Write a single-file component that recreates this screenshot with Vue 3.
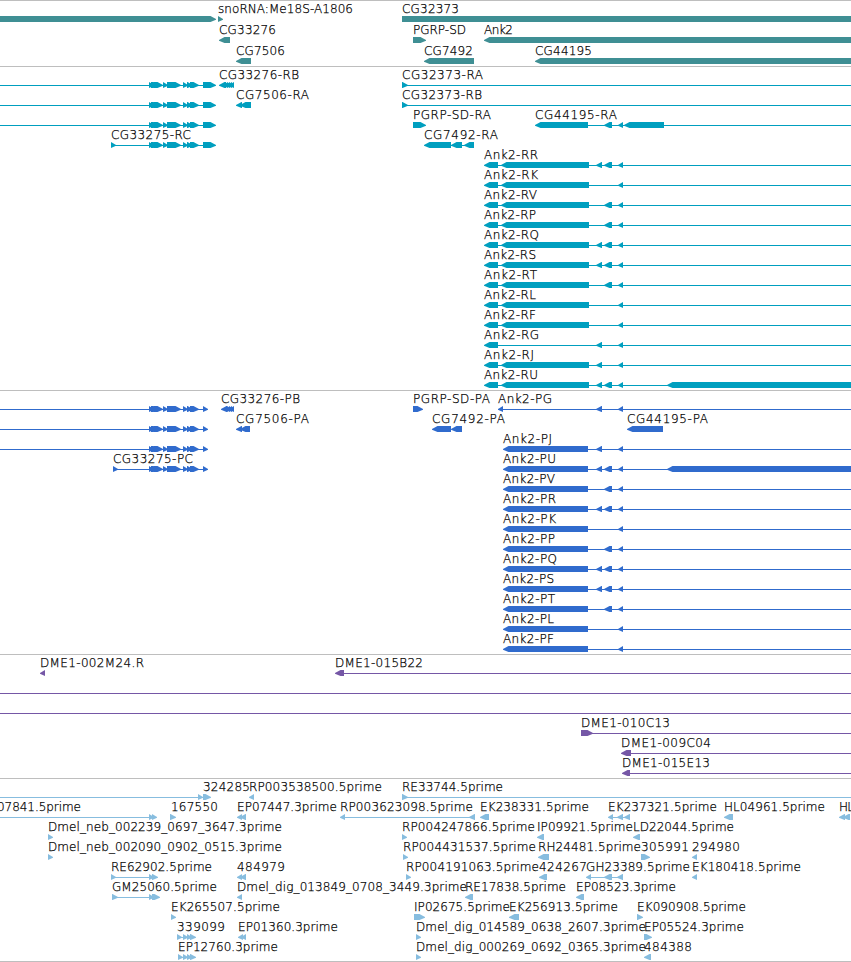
<template>
  <div class="browser">
    <section
      v-for="track in tracks"
      :key="track.name"
      class="track"
      :class="track.name"
    >
      <svg v-for="(row, i) in track.rows" :key="i" class="row">
        <g v-for="(f, j) in row" :key="j">
          <rect
            v-if="f.line"
            :x="f.line[0]"
            y="18"
            :width="f.line[1] - f.line[0]"
            height="1"
          />
          <path v-for="(p, k) in f.parts" :key="k" :d="arrow(p, f.dir)" />
          <text v-if="f.label" :x="f.x" y="12" :textLength="f.width">
            {{ f.label }}
          </text>
        </g>
      </svg>
    </section>
  </div>
</template>

<script setup>
const END = 851;

// label, label start, label end, direction, exons, connecting line
const feat = (label, x, end, dir, parts, line) => ({
  label,
  x,
  width: end - x,
  dir,
  parts,
  line,
});

function arrow([a, b], dir) {
  const head = Math.min(5.5, b - a);
  if (dir > 0) {
    const s = b - head;
    return `M${a} 15H${s}L${b} 17.9V18.7L${s} 21H${a}Z`;
  }
  const s = a + head;
  return `M${b} 15H${s}L${a} 17.9V18.7L${s} 21H${b}Z`;
}

const shared = [
  [149, 154],
  [151, 159],
  [154, 163],
  [163, 168],
  [167, 181],
  [183, 188],
  [187, 193],
  [190, 199],
];
const rnaExons = [...shared, [203, 216]];
const cdsExons = [...shared, [203, 208]];

const C = [596, 602];
const D = [604, 612];
const E = [618, 623];
const U = [667, 860];

const rna = (name, end, parts) =>
  feat("Ank2-" + name, 484, end, -1, [[484, 498], ...parts], [496, END]);
const cds = (name, end, parts) =>
  feat("Ank2-" + name, 503, end, -1, [[503, 588], ...parts], [588, END]);
const B = [501, 589];

const genes = [
  [
    feat("", 0, 0, 1, [[-10, 216]]),
    feat("snoRNA:Me18S-A1806", 218, 353, 1, [[218, 223]]),
    feat("CG32373", 402, 459, 1, [[402, 870]]),
  ],
  [
    feat("CG33276", 219, 276, -1, [[219, 230]]),
    feat("PGRP-SD", 413, 466, 1, [[413, 426]]),
    feat("Ank2", 484, 513, -1, [[484, 860]]),
  ],
  [
    feat("CG7506", 236, 285, -1, [[236, 251]]),
    feat("CG7492", 424, 473, -1, [[424, 474]]),
    feat("CG44195", 535, 592, -1, [[535, 860]]),
  ],
];

const transcripts = [
  [
    feat("", 0, 0, 1, rnaExons, [0, 205]),
    feat("CG33276-RB", 219, 299, -1, [[219, 226], [223, 228], [225, 230], [227, 232], [229, 234]]),
    feat("CG32373-RA", 402, 483, 1, [[402, 408]], [402, END]),
  ],
  [
    feat("", 0, 0, 1, rnaExons, [0, 205]),
    feat("CG7506-RA", 236, 309, -1, [[236, 242], [240, 251]]),
    feat("CG32373-RB", 402, 482, 1, [[402, 408]], [402, END]),
  ],
  [
    feat("", 0, 0, 1, rnaExons, [0, 205]),
    feat("PGRP-SD-RA", 413, 491, 1, [[413, 426]]),
    feat("CG44195-RA", 535, 617, -1, [[535, 588], D, E, [624, 664]], [588, END]),
  ],
  [
    feat("CG33275-RC", 111, 191, 1, [[111, 116], ...rnaExons], [111, 205]),
    feat("CG7492-RA", 424, 498, -1, [[424, 451], [451, 462], [464, 474]], [450, 474]),
  ],
  [rna("RR", 538, [B, C, D, E])],
  [rna("RK", 538, [B, E])],
  [rna("RV", 537, [B, D, E])],
  [rna("RP", 536, [B, D, E])],
  [rna("RQ", 539, [B, C, D, E])],
  [rna("RS", 536, [B, C, D, E])],
  [rna("RT", 537, [B, D, E])],
  [rna("RL", 536, [B, E])],
  [rna("RF", 536, [B, E])],
  [rna("RG", 539, [C, E])],
  [rna("RJ", 534, [B, C, E])],
  [rna("RU", 538, [B, C, D, E, U])],
];

const proteins = [
  [
    feat("", 0, 0, 1, cdsExons, [0, 205]),
    feat("CG33276-PB", 221, 300, -1, [[221, 227], [223, 228], [225, 230], [227, 232], [229, 234]]),
    feat("PGRP-SD-PA", 413, 490, 1, [[413, 423]]),
    feat("Ank2-PG", 498, 552, -1, [[498, 503], C, E], [498, END]),
  ],
  [
    feat("", 0, 0, 1, cdsExons, [0, 205]),
    feat("CG7506-PA", 236, 309, -1, [[236, 242], [240, 250]]),
    feat("CG7492-PA", 432, 505, -1, [[432, 451], [451, 462]]),
    feat("CG44195-PA", 627, 708, -1, [[627, 663]]),
  ],
  [
    feat("", 0, 0, 1, cdsExons, [0, 205]),
    cds("PJ", 552, [C, E]),
  ],
  [
    feat("CG33275-PC", 113, 193, 1, [[113, 118], ...cdsExons], [113, 205]),
    cds("PU", 556, [C, D, E, U]),
  ],
  [cds("PV", 555, [D, E])],
  [cds("PR", 556, [C, D, E])],
  [cds("PK", 556, [E])],
  [cds("PP", 555, [D, E])],
  [cds("PQ", 557, [C, D, E])],
  [cds("PS", 554, [C, D, E])],
  [cds("PT", 555, [D, E])],
  [cds("PL", 554, [E])],
  [cds("PF", 554, [E])],
];

const bacs = [
  [
    feat("DME1-002M24.R", 40, 144, -1, [[40, 45]]),
    feat("DME1-015B22", 335, 423, -1, [[335, 344]], [343, END]),
  ],
  [feat("", 0, 0, 1, [], [0, END])],
  [feat("", 0, 0, 1, [], [0, END])],
  [feat("DME1-010C13", 581, 670, 1, [[581, 593]], [590, END])],
  [feat("DME1-009C04", 621, 711, -1, [[621, 631]], [630, END])],
  [feat("DME1-015E13", 622, 710, -1, [[622, 630]], [629, END])],
];

const ests = [
  [
    feat("324285", 203, 250, 1, [[198, 203], [203, 211]], [0, 203]),
    feat("RP003538500.5prime", 249, 382, -1, [[249, 254]]),
    feat("RE33744.5prime", 402, 503, 1, [[402, 408]], [402, END]),
  ],
  [
    feat("07841.5prime", -3, 81, 1, [[149, 154], [152, 157]], [0, 150]),
    feat("167550", 171, 218, 1, [[170, 176]]),
    feat("EP07447.3prime", 237, 337, -1, [[237, 242], [240, 246]]),
    feat("RP003623098.5prime", 340, 473, -1, [[340, 345], [469, 475]], [342, 472]),
    feat("EK238331.5prime", 480, 589, -1, [[480, 489]]),
    feat("EK237321.5prime", 608, 717, -1, [[608, 613], [617, 623], [624, 630]], [610, 628]),
    feat("HL04961.5prime", 724, 825, -1, [[724, 733]]),
    feat("HL", 839, 854, -1, [[839, 845], [843, 850]]),
  ],
  [
    feat("Dmel_neb_002239_0697_3647.3prime", 48, 282, 1, [[48, 53]]),
    feat("RP004247866.5prime", 402, 535, 1, [[402, 407]]),
    feat("IP09921.5prime", 537, 633, -1, [[537, 544]]),
    feat("LD22044.5prime", 633, 734, -1, [[633, 640]]),
  ],
  [
    feat("Dmel_neb_002090_0902_0515.3prime", 48, 282, 1, [[48, 53]]),
    feat("RP004431537.5prime", 403, 536, 1, [[403, 408]]),
    feat("RH24481.5prime", 538, 641, -1, [[538, 549]]),
    feat("305991", 641, 689, 1, [[641, 650]]),
    feat("294980", 692, 740, -1, [[692, 697]]),
  ],
  [
    feat("RE62902.5prime", 111, 212, 1, [[111, 116], [149, 154], [152, 158]], [111, 152]),
    feat("484979", 237, 285, -1, [[237, 242], [240, 246]]),
    feat("RP004191063.5prime", 406, 539, 1, [[406, 411]]),
    feat("424267", 539, 587, -1, [[539, 547]]),
    feat("GH23389.5prime", 586, 690, -1, [[586, 591], [604, 612], [617, 623]], [588, 622]),
    feat("EK180418.5prime", 692, 801, -1, [[692, 697]]),
  ],
  [
    feat("GM25060.5prime", 112, 217, 1, [[112, 118], [149, 154], [152, 160]], [112, 152]),
    feat("Dmel_dig_013849_0708_3449.3prime", 237, 467, -1, [[237, 242]]),
    feat("RE17838.5prime", 465, 566, -1, [[465, 473]]),
    feat("EP08523.3prime", 576, 676, -1, [[576, 584]]),
  ],
  [
    feat("EK265507.5prime", 171, 280, 1, [[171, 176]]),
    feat("IP02675.5prime", 414, 510, 1, [[414, 425]]),
    feat("EK256913.5prime", 509, 618, -1, [[509, 519]]),
    feat("EK090908.5prime", 637, 746, 1, [[637, 643]]),
  ],
  [
    feat("339099", 177, 225, 1, [[177, 182], [183, 188], [187, 192], [190, 196]], [177, 192]),
    feat("EP01360.3prime", 238, 338, -1, [[238, 243], [241, 246]]),
    feat("Dmel_dig_014589_0638_2607.3prime", 416, 646, 1, [[416, 421]]),
    feat("EP05524.3prime", 644, 744, 1, [[644, 652]]),
  ],
  [
    feat("EP12760.3prime", 178, 278, 1, [[178, 183], [183, 188], [187, 192], [190, 196]], [178, 192]),
    feat("Dmel_dig_000269_0692_0365.3prime", 416, 646, 1, [[416, 421]]),
    feat("484388", 644, 692, -1, [[644, 651]]),
  ],
];

const tracks = [
  { name: "genes", rows: genes },
  { name: "transcripts", rows: transcripts },
  { name: "proteins", rows: proteins },
  { name: "bacs", rows: bacs },
  { name: "ests", rows: ests },
];
</script>

<style>
body {
  background: #fff;
}
</style>

<style scoped>
.browser {
  width: 851px;
  overflow: hidden;
  border-bottom: 1px solid #bebebe;
}

.track {
  display: flex;
  flex-direction: column;
  border-top: 1px solid #bebebe;
  padding-bottom: 3px;
}

.row {
  display: block;
  width: 851px;
  height: 20px;
  overflow: visible;
}

text {
  font-family: "DejaVu Sans", "DejaVu Sans Light", sans-serif;
  font-size: 12px;
  font-weight: 200;
  fill: #000;
  stroke: #000;
  stroke-width: 0.25px;
}

.genes {
  fill: #3f8f94;
  padding-bottom: 2px;
}

.genes .row {
  height: 21px;
}

.transcripts {
  fill: #009fbf;
}

.proteins {
  fill: #306bcd;
}

.bacs {
  fill: #7557a6;
}

.ests {
  fill: #87bddf;
  padding-bottom: 2px;
}
</style>
